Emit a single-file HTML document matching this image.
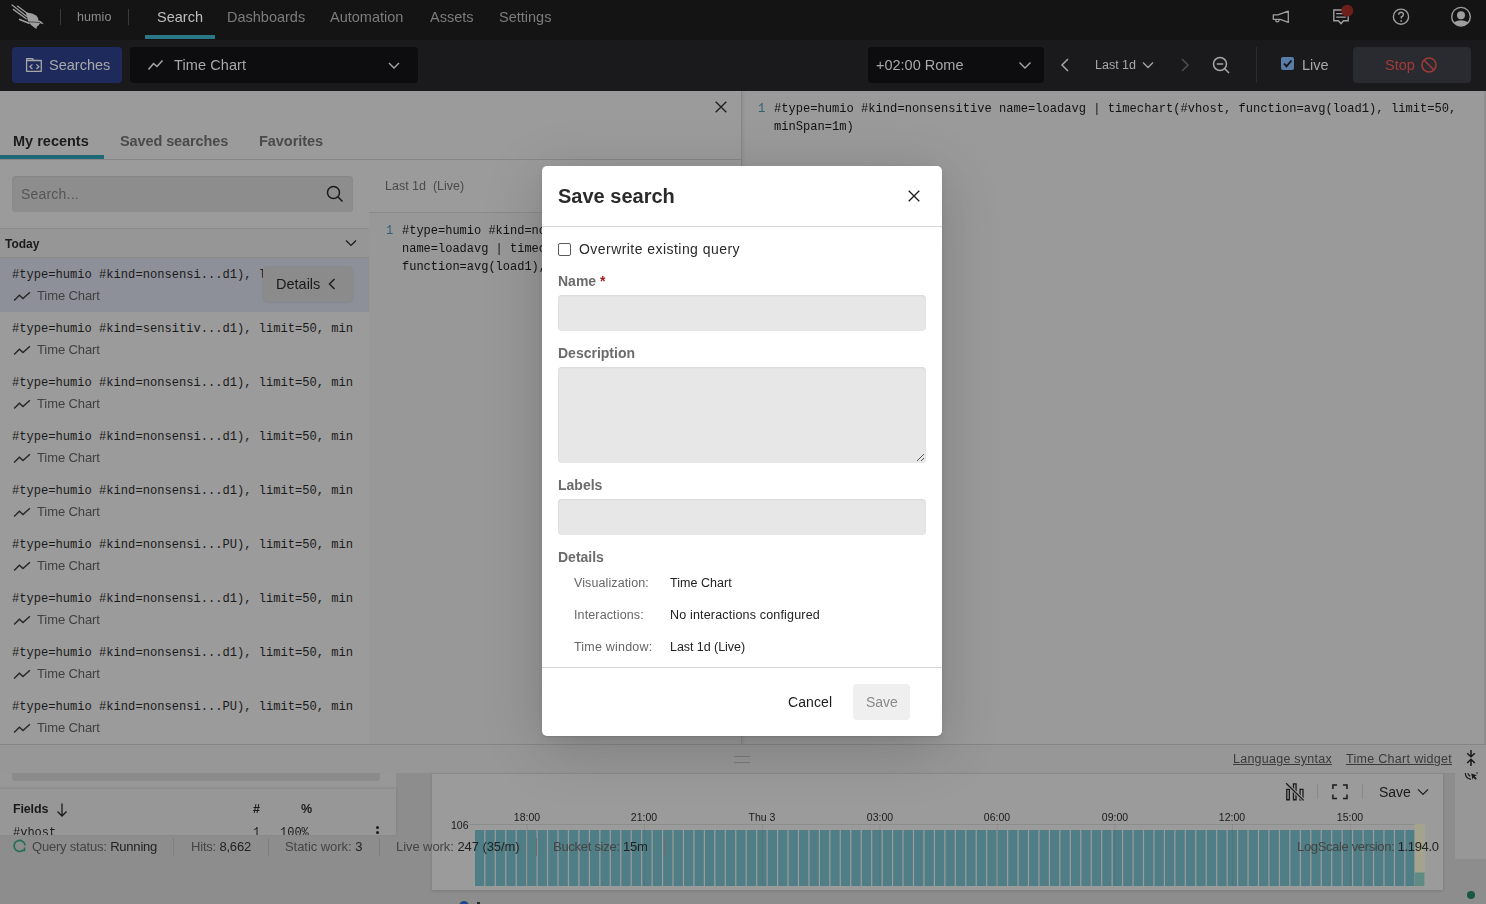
<!DOCTYPE html>
<html><head><meta charset="utf-8"><style>
html,body{margin:0;padding:0;width:1486px;height:904px;overflow:hidden;background:#9a9a9a;}
.t{position:absolute;white-space:pre;line-height:1;will-change:transform;}
.b{position:absolute;}
</style></head><body>
<div class="b" style="left:0px;top:0px;width:1486px;height:904px;background:#9a9a9a;"></div>
<div class="b" style="left:0px;top:0px;width:1486px;height:40px;background:#141414;"></div>
<svg class="b" style="left:8px;top:2px;" width="42" height="32" viewBox="0 0 42 32"><g stroke="#9f9f9f" stroke-linecap="round" fill="none"><path d="M4.1 3 L18.4 14.2" stroke-width="1.3"/><path d="M9.4 4.1 L19.8 11.7" stroke-width="1.2"/><path d="M5.3 7.4 L18.2 16.8" stroke-width="1.3"/><path d="M11.7 17.4 L21 21.2" stroke-width="1.6"/></g><path d="M17.7 10.3 L24 11.5 L28.3 13.5 L30.1 16 L30.1 18.1 L33.6 19.8 L35.8 22.3 L32 21.3 L30.5 23.5 L29 24.5 L28.3 27 L23 23 L19.8 18.4 Z" fill="#9f9f9f"/><path d="M21 19.8 L32 20.5" stroke="#151515" stroke-width="0.6"/></svg>
<div class="b" style="left:60px;top:9px;width:1px;height:16px;background:#3a3a3a;"></div>
<div class="t" style="left:77.3px;top:11.22px;font-size:12.5px;color:#8c8c8c;font-weight:400;font-family:'Liberation Sans', sans-serif;letter-spacing:0.1px;">humio</div>
<div class="b" style="left:128px;top:9px;width:1px;height:16px;background:#3a3a3a;"></div>
<div class="t" style="left:157px;top:9.93px;font-size:14.5px;color:#bdbdbd;font-weight:500;font-family:'Liberation Sans', sans-serif;">Search</div>
<div class="b" style="left:145px;top:35px;width:70px;height:4px;background:#2a7788;"></div>
<div class="t" style="left:226.5px;top:9.93px;font-size:14.5px;color:#7c7c7c;font-weight:400;font-family:'Liberation Sans', sans-serif;">Dashboards</div>
<div class="t" style="left:330px;top:9.93px;font-size:14.5px;color:#7c7c7c;font-weight:400;font-family:'Liberation Sans', sans-serif;">Automation</div>
<div class="t" style="left:430.3px;top:9.93px;font-size:14.5px;color:#7c7c7c;font-weight:400;font-family:'Liberation Sans', sans-serif;">Assets</div>
<div class="t" style="left:498.5px;top:9.93px;font-size:14.5px;color:#7c7c7c;font-weight:400;font-family:'Liberation Sans', sans-serif;">Settings</div>
<svg class="b" style="left:1270px;top:6px;" width="22" height="22" viewBox="0 0 22 22"><path d="M3.3 8.9 H7.8 L18.3 5.1 V16.4 L10.2 13.3 H3.3 Z" fill="none" stroke="#9e9e9e" stroke-width="1.3" stroke-linejoin="round"/><path d="M5.6 13.4 Q5.6 15.8 7.4 15.8 Q9.2 15.8 9.2 13.6" fill="none" stroke="#9e9e9e" stroke-width="1.2"/></svg>
<svg class="b" style="left:1330px;top:4px;" width="26" height="26" viewBox="0 0 26 26"><path d="M3.8 6 H18.2 V16.8 H13.6 L11 19.6 L8.4 16.8 H3.8 Z" fill="none" stroke="#9e9e9e" stroke-width="1.4"/><path d="M6.2 9.6 H15 M6.2 13.2 H15.8" stroke="#9e9e9e" stroke-width="1.3"/><circle cx="17.3" cy="6.8" r="6" fill="#6f1f1b"/></svg>
<svg class="b" style="left:1391px;top:7px;" width="20" height="20" viewBox="0 0 20 20"><circle cx="10" cy="9.7" r="7.6" fill="none" stroke="#9e9e9e" stroke-width="1.4"/><path d="M7.6 7.8 Q7.8 5.3 10.1 5.3 Q12.5 5.4 12.4 7.6 Q12.3 9 10.3 10 V11.6" fill="none" stroke="#9e9e9e" stroke-width="1.4"/><circle cx="10.2" cy="13.9" r="0.9" fill="#9e9e9e"/></svg>
<svg class="b" style="left:1450px;top:6px;" width="22" height="22" viewBox="0 0 22 22"><defs><clipPath id="uc"><circle cx="11" cy="10.7" r="9.3"/></clipPath></defs><circle cx="11" cy="10.7" r="9.3" fill="none" stroke="#9e9e9e" stroke-width="1.4"/><g clip-path="url(#uc)"><circle cx="11" cy="9.3" r="4" fill="#9e9e9e"/><ellipse cx="11" cy="19.8" rx="8.5" ry="5.6" fill="#9e9e9e"/></g></svg>
<div class="b" style="left:0px;top:40px;width:1486px;height:51px;background:#1a1a1d;"></div>
<div class="b" style="left:12px;top:47px;width:110px;height:36px;background:#1e2a5b;border-radius:4px;"></div>
<svg class="b" style="left:25px;top:56px;" width="19" height="18" viewBox="0 0 19 18"><path d="M1.6 2.6 V15.3 H16.3 V4.5 H8.8 L7.6 2.6 Z M1.6 4.5 H8.8" fill="none" stroke="#a6a6a6" stroke-width="1.3" stroke-linejoin="round"/><path d="M7.4 8.4 L4.9 10.8 L7.4 13.1 M11.4 8.4 L13.9 10.8 L11.4 13.1" fill="none" stroke="#a6a6a6" stroke-width="1.3"/></svg>
<div class="t" style="left:48.5px;top:57.73px;font-size:14.5px;color:#a8a8a8;font-weight:400;font-family:'Liberation Sans', sans-serif;">Searches</div>
<div class="b" style="left:130px;top:47px;width:288px;height:36px;background:#0d0d0f;border-radius:4px;"></div>
<svg class="b" style="left:147px;top:57px;" width="18" height="16" viewBox="0 0 18 16"><path d="M1.5 12.5 L6.5 6.5 L10 9.5 L15.5 3.5" fill="none" stroke="#a6a6a6" stroke-width="1.5"/></svg>
<div class="t" style="left:174.3px;top:57.73px;font-size:14.5px;color:#a8a8a8;font-weight:400;font-family:'Liberation Sans', sans-serif;letter-spacing:0.1px;">Time Chart</div>
<svg class="b" style="left:387px;top:58px;" width="14" height="14" viewBox="0 0 14 14"><path d="M2 5 L7 10 L12 5" fill="none" stroke="#a6a6a6" stroke-width="1.4"/></svg>
<div class="b" style="left:868px;top:47px;width:176px;height:36px;background:#0d0d0f;border-radius:4px;"></div>
<div class="t" style="left:876px;top:57.73px;font-size:14.5px;color:#a8a8a8;font-weight:400;font-family:'Liberation Sans', sans-serif;">+02:00 Rome</div>
<svg class="b" style="left:1018px;top:58px;" width="14" height="14" viewBox="0 0 14 14"><path d="M1.5 4.5 L7 10 L12.5 4.5" fill="none" stroke="#a6a6a6" stroke-width="1.4"/></svg>
<svg class="b" style="left:1058px;top:57px;" width="14" height="16" viewBox="0 0 14 16"><path d="M10 2 L4 8 L10 14" fill="none" stroke="#a6a6a6" stroke-width="1.5"/></svg>
<div class="t" style="left:1095px;top:59.42px;font-size:12.5px;color:#a8a8a8;font-weight:400;font-family:'Liberation Sans', sans-serif;">Last 1d</div>
<svg class="b" style="left:1141px;top:59px;" width="14" height="12" viewBox="0 0 14 12"><path d="M2 3.5 L7 8.5 L12 3.5" fill="none" stroke="#a6a6a6" stroke-width="1.3"/></svg>
<svg class="b" style="left:1178px;top:57px;" width="14" height="16" viewBox="0 0 14 16"><path d="M4 2 L10 8 L4 14" fill="none" stroke="#4e4e52" stroke-width="1.5"/></svg>
<svg class="b" style="left:1211px;top:55px;" width="22" height="20" viewBox="0 0 22 20"><circle cx="9" cy="9" r="6.5" fill="none" stroke="#a6a6a6" stroke-width="1.5"/><path d="M5.8 9 H12.2 M13.8 13.8 L18 18" stroke="#a6a6a6" stroke-width="1.6"/></svg>
<div class="b" style="left:1256px;top:47px;width:1px;height:36px;background:#2c2c2e;"></div>
<div class="b" style="left:1281px;top:57px;width:13px;height:13px;background:#5a7ca8;border-radius:2px;"></div>
<svg class="b" style="left:1281px;top:57px;" width="13" height="13" viewBox="0 0 13 13"><path d="M3 6.5 L5.5 9.3 L10.5 3.5" fill="none" stroke="#111" stroke-width="1.8"/></svg>
<div class="t" style="left:1302px;top:57.73px;font-size:14.5px;color:#a8a8a8;font-weight:400;font-family:'Liberation Sans', sans-serif;">Live</div>
<div class="b" style="left:1353px;top:47px;width:118px;height:36px;background:#2a2b30;border-radius:4px;"></div>
<div class="t" style="left:1384.5px;top:57.73px;font-size:14.5px;color:#a33a3a;font-weight:400;font-family:'Liberation Sans', sans-serif;">Stop</div>
<svg class="b" style="left:1420px;top:56px;" width="18" height="18" viewBox="0 0 18 18"><circle cx="9" cy="9" r="7" fill="none" stroke="#a33a3a" stroke-width="1.5"/><path d="M4.2 4.2 L13.8 13.8" stroke="#a33a3a" stroke-width="1.5"/></svg>
<div class="b" style="left:0px;top:91px;width:741px;height:654px;background:#9b9b9b;"></div>
<div class="b" style="left:742px;top:91px;width:744px;height:654px;background:#9a9a9a;"></div>
<div class="b" style="left:741px;top:91px;width:1px;height:654px;background:#878787;"></div>
<div class="b" style="left:742px;top:91px;width:4px;height:654px;background:linear-gradient(90deg,rgba(0,0,0,0.06),rgba(0,0,0,0));"></div>
<div class="b" style="left:1484px;top:91px;width:2px;height:654px;background:#8e8e8e;"></div>
<svg class="b" style="left:714px;top:100px;" width="14" height="14" viewBox="0 0 14 14"><path d="M1.7 1.7 L12.3 12.3 M12.3 1.7 L1.7 12.3" stroke="#1c1c1c" stroke-width="1.3"/></svg>
<div class="t" style="left:12.5px;top:133.73px;font-size:14.5px;color:#1c1c1c;font-weight:700;font-family:'Liberation Sans', sans-serif;">My recents</div>
<div class="t" style="left:119.8px;top:133.73px;font-size:14.5px;color:#4a4a4a;font-weight:700;font-family:'Liberation Sans', sans-serif;letter-spacing:-0.1px;">Saved searches</div>
<div class="t" style="left:259px;top:133.73px;font-size:14.5px;color:#4a4a4a;font-weight:700;font-family:'Liberation Sans', sans-serif;letter-spacing:-0.05px;">Favorites</div>
<div class="b" style="left:0px;top:159px;width:741px;height:1px;background:#878787;"></div>
<div class="b" style="left:0px;top:155px;width:104px;height:4px;background:#1e6878;"></div>
<div class="b" style="left:12px;top:176px;width:341px;height:36px;background:#8d8d8d;border-radius:4px;box-shadow:inset 0 1px 2px rgba(0,0,0,0.06);"></div>
<div class="t" style="left:20.5px;top:187.15px;font-size:14px;color:#555555;font-weight:400;font-family:'Liberation Sans', sans-serif;letter-spacing:0.2px;">Search...</div>
<svg class="b" style="left:324px;top:183px;" width="22" height="22" viewBox="0 0 22 22"><circle cx="9.5" cy="9.5" r="6" fill="none" stroke="#1a1a1a" stroke-width="1.5"/><path d="M13.8 13.8 L18.5 18.5" stroke="#1a1a1a" stroke-width="1.6"/></svg>
<div class="b" style="left:0px;top:228px;width:369px;height:1px;background:#8c8c8c;"></div>
<div class="b" style="left:0px;top:229px;width:369px;height:28px;background:#969696;"></div>
<div class="b" style="left:0px;top:257px;width:369px;height:1px;background:#8a8a8a;"></div>
<div class="t" style="left:5px;top:237.84px;font-size:12px;color:#1a1a1a;font-weight:700;font-family:'Liberation Sans', sans-serif;">Today</div>
<svg class="b" style="left:344px;top:237px;" width="14" height="12" viewBox="0 0 14 12"><path d="M2 3.5 L7 8.5 L12 3.5" fill="none" stroke="#1a1a1a" stroke-width="1.2"/></svg>
<div class="b" style="left:0;top:258px;width:369px;height:487px;overflow:hidden;">
<div class="b" style="left:0;top:0;width:369px;height:54px;background:#8e9099;"></div>
<div class="b" style="left:12px;top:11.33px;width:251px;overflow:hidden;white-space:pre;font-family:'Liberation Mono', monospace;font-size:12.1px;line-height:1;color:#1a1a1a;">#type=humio #kind=nonsensi...d1), limit=50, minSpan=1m)</div>
<svg class="b" style="left:13px;top:33px" width="18" height="12" viewBox="0 0 18 12"><path d="M1.1 9.6 L6.4 4.2 L10 7.6 L16.9 1.3" fill="none" stroke="#262626" stroke-width="1.4"/></svg>
<div class="t" style="left:36.8px;top:30.70px;font-size:13px;letter-spacing:-0.1px;color:#404040;font-family:'Liberation Sans', sans-serif;">Time Chart</div>
<div class="b" style="left:12px;top:65.33px;width:341px;overflow:hidden;white-space:pre;font-family:'Liberation Mono', monospace;font-size:12.1px;line-height:1;color:#1a1a1a;">#type=humio #kind=sensitiv...d1), limit=50, minSpan=1m)</div>
<svg class="b" style="left:13px;top:87px" width="18" height="12" viewBox="0 0 18 12"><path d="M1.1 9.6 L6.4 4.2 L10 7.6 L16.9 1.3" fill="none" stroke="#262626" stroke-width="1.4"/></svg>
<div class="t" style="left:36.8px;top:84.70px;font-size:13px;letter-spacing:-0.1px;color:#404040;font-family:'Liberation Sans', sans-serif;">Time Chart</div>
<div class="b" style="left:12px;top:119.33px;width:341px;overflow:hidden;white-space:pre;font-family:'Liberation Mono', monospace;font-size:12.1px;line-height:1;color:#1a1a1a;">#type=humio #kind=nonsensi...d1), limit=50, minSpan=1m)</div>
<svg class="b" style="left:13px;top:141px" width="18" height="12" viewBox="0 0 18 12"><path d="M1.1 9.6 L6.4 4.2 L10 7.6 L16.9 1.3" fill="none" stroke="#262626" stroke-width="1.4"/></svg>
<div class="t" style="left:36.8px;top:138.70px;font-size:13px;letter-spacing:-0.1px;color:#404040;font-family:'Liberation Sans', sans-serif;">Time Chart</div>
<div class="b" style="left:12px;top:173.33px;width:341px;overflow:hidden;white-space:pre;font-family:'Liberation Mono', monospace;font-size:12.1px;line-height:1;color:#1a1a1a;">#type=humio #kind=nonsensi...d1), limit=50, minSpan=1m)</div>
<svg class="b" style="left:13px;top:195px" width="18" height="12" viewBox="0 0 18 12"><path d="M1.1 9.6 L6.4 4.2 L10 7.6 L16.9 1.3" fill="none" stroke="#262626" stroke-width="1.4"/></svg>
<div class="t" style="left:36.8px;top:192.70px;font-size:13px;letter-spacing:-0.1px;color:#404040;font-family:'Liberation Sans', sans-serif;">Time Chart</div>
<div class="b" style="left:12px;top:227.33px;width:341px;overflow:hidden;white-space:pre;font-family:'Liberation Mono', monospace;font-size:12.1px;line-height:1;color:#1a1a1a;">#type=humio #kind=nonsensi...d1), limit=50, minSpan=1m)</div>
<svg class="b" style="left:13px;top:249px" width="18" height="12" viewBox="0 0 18 12"><path d="M1.1 9.6 L6.4 4.2 L10 7.6 L16.9 1.3" fill="none" stroke="#262626" stroke-width="1.4"/></svg>
<div class="t" style="left:36.8px;top:246.70px;font-size:13px;letter-spacing:-0.1px;color:#404040;font-family:'Liberation Sans', sans-serif;">Time Chart</div>
<div class="b" style="left:12px;top:281.33px;width:341px;overflow:hidden;white-space:pre;font-family:'Liberation Mono', monospace;font-size:12.1px;line-height:1;color:#1a1a1a;">#type=humio #kind=nonsensi...PU), limit=50, minSpan=1m)</div>
<svg class="b" style="left:13px;top:303px" width="18" height="12" viewBox="0 0 18 12"><path d="M1.1 9.6 L6.4 4.2 L10 7.6 L16.9 1.3" fill="none" stroke="#262626" stroke-width="1.4"/></svg>
<div class="t" style="left:36.8px;top:300.70px;font-size:13px;letter-spacing:-0.1px;color:#404040;font-family:'Liberation Sans', sans-serif;">Time Chart</div>
<div class="b" style="left:12px;top:335.33px;width:341px;overflow:hidden;white-space:pre;font-family:'Liberation Mono', monospace;font-size:12.1px;line-height:1;color:#1a1a1a;">#type=humio #kind=nonsensi...d1), limit=50, minSpan=1m)</div>
<svg class="b" style="left:13px;top:357px" width="18" height="12" viewBox="0 0 18 12"><path d="M1.1 9.6 L6.4 4.2 L10 7.6 L16.9 1.3" fill="none" stroke="#262626" stroke-width="1.4"/></svg>
<div class="t" style="left:36.8px;top:354.70px;font-size:13px;letter-spacing:-0.1px;color:#404040;font-family:'Liberation Sans', sans-serif;">Time Chart</div>
<div class="b" style="left:12px;top:389.33px;width:341px;overflow:hidden;white-space:pre;font-family:'Liberation Mono', monospace;font-size:12.1px;line-height:1;color:#1a1a1a;">#type=humio #kind=nonsensi...d1), limit=50, minSpan=1m)</div>
<svg class="b" style="left:13px;top:411px" width="18" height="12" viewBox="0 0 18 12"><path d="M1.1 9.6 L6.4 4.2 L10 7.6 L16.9 1.3" fill="none" stroke="#262626" stroke-width="1.4"/></svg>
<div class="t" style="left:36.8px;top:408.70px;font-size:13px;letter-spacing:-0.1px;color:#404040;font-family:'Liberation Sans', sans-serif;">Time Chart</div>
<div class="b" style="left:12px;top:443.33px;width:341px;overflow:hidden;white-space:pre;font-family:'Liberation Mono', monospace;font-size:12.1px;line-height:1;color:#1a1a1a;">#type=humio #kind=nonsensi...PU), limit=50, minSpan=1m)</div>
<svg class="b" style="left:13px;top:465px" width="18" height="12" viewBox="0 0 18 12"><path d="M1.1 9.6 L6.4 4.2 L10 7.6 L16.9 1.3" fill="none" stroke="#262626" stroke-width="1.4"/></svg>
<div class="t" style="left:36.8px;top:462.70px;font-size:13px;letter-spacing:-0.1px;color:#404040;font-family:'Liberation Sans', sans-serif;">Time Chart</div>
</div>
<div class="b" style="left:263px;top:266px;width:90px;height:36px;background:#8b8b8b;border-radius:5px;box-shadow:0 1px 2px rgba(0,0,0,0.08);"></div>
<div class="t" style="left:275.8px;top:276.73px;font-size:14.5px;color:#1a1a1a;font-weight:400;font-family:'Liberation Sans', sans-serif;">Details</div>
<svg class="b" style="left:326px;top:277px;" width="12" height="14" viewBox="0 0 12 14"><path d="M8.5 2 L3.5 7 L8.5 12" fill="none" stroke="#1a1a1a" stroke-width="1.4"/></svg>
<div class="b" style="left:369px;top:212px;width:0px;height:0px;background:#000;"></div>
<div class="t" style="left:385px;top:180.42px;font-size:12.5px;color:#4a4a4a;font-weight:400;font-family:'Liberation Sans', sans-serif;">Last 1d  (Live)</div>
<div class="b" style="left:369px;top:212px;width:372px;height:1px;background:#8a8a8a;"></div>
<div class="b" style="left:369px;top:213px;width:372px;height:532px;background:#989898;"></div>
<div class="t" style="left:385.5px;top:225.30px;font-size:12px;color:#2d5f70;font-weight:400;font-family:'Liberation Mono', monospace;">1</div>
<div class="t" style="left:402px;top:225.30px;font-size:12px;color:#111111;font-weight:400;font-family:'Liberation Mono', monospace;">#type=humio #kind=nonsensitive</div>
<div class="t" style="left:402px;top:243.30px;font-size:12px;color:#111111;font-weight:400;font-family:'Liberation Mono', monospace;">name=loadavg | timechart(#vhost,</div>
<div class="t" style="left:402px;top:261.30px;font-size:12px;color:#111111;font-weight:400;font-family:'Liberation Mono', monospace;">function=avg(load1), limit=50,</div>
<div class="t" style="left:757.5px;top:102.80px;font-size:12px;color:#2d5f70;font-weight:400;font-family:'Liberation Mono', monospace;">1</div>
<div class="t" style="left:774px;top:102.73px;font-size:12.1px;color:#111111;font-weight:400;font-family:'Liberation Mono', monospace;">#type=humio #kind=nonsensitive name=loadavg | timechart(#vhost, function=avg(load1), limit=50,</div>
<div class="t" style="left:774px;top:120.73px;font-size:12.1px;color:#111111;font-weight:400;font-family:'Liberation Mono', monospace;">minSpan=1m)</div>
<div class="b" style="left:0px;top:745px;width:1486px;height:159px;background:#8d8d8d;"></div>
<div class="b" style="left:0px;top:744px;width:1486px;height:1px;background:#858585;"></div>
<div class="b" style="left:0px;top:745px;width:1486px;height:28px;background:#979797;"></div>
<div class="b" style="left:734px;top:756px;width:16px;height:1px;background:#7a7a7a;"></div>
<div class="b" style="left:734px;top:762px;width:16px;height:1px;background:#7a7a7a;"></div>
<div class="t" style="left:1233px;top:753.42px;font-size:12.5px;color:#3a3a3a;font-weight:400;font-family:'Liberation Sans', sans-serif;letter-spacing:0.25px;text-decoration:underline;">Language syntax</div>
<div class="t" style="left:1346px;top:753.42px;font-size:12.5px;color:#3a3a3a;font-weight:400;font-family:'Liberation Sans', sans-serif;letter-spacing:0.3px;text-decoration:underline;">Time Chart widget</div>
<svg class="b" style="left:1463px;top:748px;" width="16" height="20" viewBox="0 0 16 20"><path d="M8 2 V8.5 M4.2 5.2 L8 8.8 L11.8 5.2 M8 18 V11.5 M4.2 15 L8 11.3 L11.8 15" fill="none" stroke="#1a1a1a" stroke-width="1.5"/></svg>
<div class="b" style="left:0px;top:773px;width:396px;height:16px;background:#989898;"></div>
<div class="b" style="left:12px;top:773px;width:368px;height:8px;background:#8b8b8b;border-radius:0 0 4px 4px;"></div>
<div class="b" style="left:0px;top:789px;width:396px;height:46px;background:#979797;box-shadow:0 -1px 3px rgba(0,0,0,0.12);"></div>
<div class="t" style="left:13px;top:803.42px;font-size:12.5px;color:#1a1a1a;font-weight:700;font-family:'Liberation Sans', sans-serif;letter-spacing:-0.15px;">Fields</div>
<svg class="b" style="left:55px;top:802px;" width="14" height="16" viewBox="0 0 14 16"><path d="M7 1.5 V14 M2.5 9.5 L7 14 L11.5 9.5" fill="none" stroke="#1a1a1a" stroke-width="1.3"/></svg>
<div class="t" style="left:253px;top:803.42px;font-size:12.5px;color:#1a1a1a;font-weight:700;font-family:'Liberation Sans', sans-serif;">#</div>
<div class="t" style="left:301px;top:803.42px;font-size:12.5px;color:#1a1a1a;font-weight:700;font-family:'Liberation Sans', sans-serif;">%</div>
<div class="b" style="left:0;top:789px;width:396px;height:46px;overflow:hidden;">
<div class="t" style="left:13px;top:38.30px;font-family:'Liberation Mono', monospace;font-size:12px;color:#1a1a1a;">#vhost</div>
<div class="t" style="left:253px;top:38.30px;font-family:'Liberation Mono', monospace;font-size:12px;color:#1a1a1a;">1</div>
<div class="t" style="left:280px;top:38.30px;font-family:'Liberation Mono', monospace;font-size:12px;color:#1a1a1a;">100%</div>
<div class="b" style="left:376px;top:37px;width:3px;height:3px;border-radius:50%;background:#1a1a1a;"></div>
<div class="b" style="left:376px;top:42px;width:3px;height:3px;border-radius:50%;background:#1a1a1a;"></div>
</div>
<div class="b" style="left:432px;top:773px;width:1011px;height:117px;background:#9b9b9b;box-shadow:0 1px 3px rgba(0,0,0,0.15);"></div>
<div class="b" style="left:432px;top:773px;width:1054px;height:1px;background:#8a8a8a;"></div>
<div class="b" style="left:1455px;top:773px;width:31px;height:86px;background:#979797;"></div>
<svg class="b" style="left:1463px;top:770px;" width="16" height="12" viewBox="0 0 16 12"><path d="M2.3 3 Q2.5 8.5 8 9.3 M4.8 3.3 Q5.8 5.5 7.3 6.3" fill="none" stroke="#1a1a1a" stroke-width="1.2"/><path d="M8.2 3.6 L14 5.3 L11.6 6.3 L13.8 8.6 L12.5 9.7 L10.4 7.4 L9.6 9.8 Z" fill="#1a1a1a"/><circle cx="14" cy="3" r="0.8" fill="#1a1a1a"/></svg>
<div class="b" style="left:1467px;top:891px;width:8px;height:8px;border-radius:50%;background:#1a5840;"></div>
<svg class="b" style="left:1283px;top:781px;" width="24" height="22" viewBox="0 0 24 22"><path d="M3.75 8.45 H6.35 V18.75 H3.75 Z M10.45 2.85 H13.05 V18.75 H10.45 Z M17.05 8.45 H19.95 V18.75 H17.05 Z" fill="none" stroke="#1a1a1a" stroke-width="1.3"/><path d="M3.1 2.2 L20.6 19.4" stroke="#9b9b9b" stroke-width="3.2"/><path d="M3.1 2.2 L20.6 19.4" stroke="#1a1a1a" stroke-width="1.3"/></svg>
<div class="b" style="left:1317px;top:784px;width:1px;height:15px;background:#888;"></div>
<svg class="b" style="left:1329px;top:782px;" width="22" height="20" viewBox="0 0 22 20"><path d="M3.9 7 V3.1 H8 M14 3.1 H18 V7 M18 12.5 V16.5 H14 M8 16.5 H3.9 V12.5" fill="none" stroke="#1a1a1a" stroke-width="1.5"/></svg>
<div class="b" style="left:1362px;top:784px;width:1px;height:15px;background:#888;"></div>
<div class="t" style="left:1379.4px;top:785.35px;font-size:14px;color:#1a1a1a;font-weight:400;font-family:'Liberation Sans', sans-serif;">Save</div>
<svg class="b" style="left:1416px;top:786px;" width="14" height="12" viewBox="0 0 14 12"><path d="M2 3.3 L7 8.3 L12 3.3" fill="none" stroke="#1a1a1a" stroke-width="1.2"/></svg>
<div class="t" style="left:451px;top:820.11px;font-size:10.5px;color:#1a1a1a;font-weight:400;font-family:'Liberation Sans', sans-serif;">106</div>
<div class="b" style="left:470px;top:824px;width:955px;height:1px;background:#8c8c8c;"></div>
<div class="t" style="left:496.5px;width:60px;text-align:center;top:812.11px;font-size:10.5px;color:#1a1a1a;font-family:'Liberation Sans', sans-serif;">18:00</div>
<div class="t" style="left:614px;width:60px;text-align:center;top:812.11px;font-size:10.5px;color:#1a1a1a;font-family:'Liberation Sans', sans-serif;">21:00</div>
<div class="t" style="left:732px;width:60px;text-align:center;top:812.11px;font-size:10.5px;color:#1a1a1a;font-family:'Liberation Sans', sans-serif;">Thu 3</div>
<div class="t" style="left:849.5px;width:60px;text-align:center;top:812.11px;font-size:10.5px;color:#1a1a1a;font-family:'Liberation Sans', sans-serif;">03:00</div>
<div class="t" style="left:967px;width:60px;text-align:center;top:812.11px;font-size:10.5px;color:#1a1a1a;font-family:'Liberation Sans', sans-serif;">06:00</div>
<div class="t" style="left:1084.5px;width:60px;text-align:center;top:812.11px;font-size:10.5px;color:#1a1a1a;font-family:'Liberation Sans', sans-serif;">09:00</div>
<div class="t" style="left:1202px;width:60px;text-align:center;top:812.11px;font-size:10.5px;color:#1a1a1a;font-family:'Liberation Sans', sans-serif;">12:00</div>
<div class="t" style="left:1320px;width:60px;text-align:center;top:812.11px;font-size:10.5px;color:#1a1a1a;font-family:'Liberation Sans', sans-serif;">15:00</div>
<svg class="b" style="left:432px;top:773px;" width="1011" height="116" viewBox="0 0 1011 116"><rect x="43.00" y="57" width="9.21" height="56" fill="#4f7e86"/><rect x="53.45" y="57" width="9.21" height="56" fill="#4f7e86"/><rect x="63.91" y="57" width="9.21" height="56" fill="#4f7e86"/><rect x="74.37" y="57" width="9.21" height="56" fill="#4f7e86"/><rect x="84.82" y="57" width="9.21" height="56" fill="#4f7e86"/><rect x="95.27" y="57" width="9.21" height="56" fill="#4f7e86"/><rect x="105.73" y="57" width="9.21" height="56" fill="#4f7e86"/><rect x="116.18" y="57" width="9.21" height="56" fill="#4f7e86"/><rect x="126.64" y="57" width="9.21" height="56" fill="#4f7e86"/><rect x="137.10" y="57" width="9.21" height="56" fill="#4f7e86"/><rect x="147.55" y="57" width="9.21" height="56" fill="#4f7e86"/><rect x="158.00" y="57" width="9.21" height="56" fill="#4f7e86"/><rect x="168.46" y="57" width="9.21" height="56" fill="#4f7e86"/><rect x="178.91" y="57" width="9.21" height="56" fill="#4f7e86"/><rect x="189.37" y="57" width="9.21" height="56" fill="#4f7e86"/><rect x="199.83" y="57" width="9.21" height="56" fill="#4f7e86"/><rect x="210.28" y="57" width="9.21" height="56" fill="#4f7e86"/><rect x="220.74" y="57" width="9.21" height="56" fill="#4f7e86"/><rect x="231.19" y="57" width="9.21" height="56" fill="#4f7e86"/><rect x="241.64" y="57" width="9.21" height="56" fill="#4f7e86"/><rect x="252.10" y="57" width="9.21" height="56" fill="#4f7e86"/><rect x="262.56" y="57" width="9.21" height="56" fill="#4f7e86"/><rect x="273.01" y="57" width="9.21" height="56" fill="#4f7e86"/><rect x="283.47" y="57" width="9.21" height="56" fill="#4f7e86"/><rect x="293.92" y="57" width="9.21" height="56" fill="#4f7e86"/><rect x="304.38" y="57" width="9.21" height="56" fill="#4f7e86"/><rect x="314.83" y="57" width="9.21" height="56" fill="#4f7e86"/><rect x="325.29" y="57" width="9.21" height="56" fill="#4f7e86"/><rect x="335.74" y="57" width="9.21" height="56" fill="#4f7e86"/><rect x="346.19" y="57" width="9.21" height="56" fill="#4f7e86"/><rect x="356.65" y="57" width="9.21" height="56" fill="#4f7e86"/><rect x="367.11" y="57" width="9.21" height="56" fill="#4f7e86"/><rect x="377.56" y="57" width="9.21" height="56" fill="#4f7e86"/><rect x="388.01" y="57" width="9.21" height="56" fill="#4f7e86"/><rect x="398.47" y="57" width="9.21" height="56" fill="#4f7e86"/><rect x="408.92" y="57" width="9.21" height="56" fill="#4f7e86"/><rect x="419.38" y="57" width="9.21" height="56" fill="#4f7e86"/><rect x="429.84" y="57" width="9.21" height="56" fill="#4f7e86"/><rect x="440.29" y="57" width="9.21" height="56" fill="#4f7e86"/><rect x="450.75" y="57" width="9.21" height="56" fill="#4f7e86"/><rect x="461.20" y="57" width="9.21" height="56" fill="#4f7e86"/><rect x="471.65" y="57" width="9.21" height="56" fill="#4f7e86"/><rect x="482.11" y="57" width="9.21" height="56" fill="#4f7e86"/><rect x="492.57" y="57" width="9.21" height="56" fill="#4f7e86"/><rect x="503.02" y="57" width="9.21" height="56" fill="#4f7e86"/><rect x="513.48" y="57" width="9.21" height="56" fill="#4f7e86"/><rect x="523.93" y="57" width="9.21" height="56" fill="#4f7e86"/><rect x="534.38" y="57" width="9.21" height="56" fill="#4f7e86"/><rect x="544.84" y="57" width="9.21" height="56" fill="#4f7e86"/><rect x="555.29" y="57" width="9.21" height="56" fill="#4f7e86"/><rect x="565.75" y="57" width="9.21" height="56" fill="#4f7e86"/><rect x="576.21" y="57" width="9.21" height="56" fill="#4f7e86"/><rect x="586.66" y="57" width="9.21" height="56" fill="#4f7e86"/><rect x="597.12" y="57" width="9.21" height="56" fill="#4f7e86"/><rect x="607.57" y="57" width="9.21" height="56" fill="#4f7e86"/><rect x="618.03" y="57" width="9.21" height="56" fill="#4f7e86"/><rect x="628.48" y="57" width="9.21" height="56" fill="#4f7e86"/><rect x="638.93" y="57" width="9.21" height="56" fill="#4f7e86"/><rect x="649.39" y="57" width="9.21" height="56" fill="#4f7e86"/><rect x="659.85" y="57" width="9.21" height="56" fill="#4f7e86"/><rect x="670.30" y="57" width="9.21" height="56" fill="#4f7e86"/><rect x="680.76" y="57" width="9.21" height="56" fill="#4f7e86"/><rect x="691.21" y="57" width="9.21" height="56" fill="#4f7e86"/><rect x="701.66" y="57" width="9.21" height="56" fill="#4f7e86"/><rect x="712.12" y="57" width="9.21" height="56" fill="#4f7e86"/><rect x="722.58" y="57" width="9.21" height="56" fill="#4f7e86"/><rect x="733.03" y="57" width="9.21" height="56" fill="#4f7e86"/><rect x="743.49" y="57" width="9.21" height="56" fill="#4f7e86"/><rect x="753.94" y="57" width="9.21" height="56" fill="#4f7e86"/><rect x="764.39" y="57" width="9.21" height="56" fill="#4f7e86"/><rect x="774.85" y="57" width="9.21" height="56" fill="#4f7e86"/><rect x="785.30" y="57" width="9.21" height="56" fill="#4f7e86"/><rect x="795.76" y="57" width="9.21" height="56" fill="#4f7e86"/><rect x="806.22" y="57" width="9.21" height="56" fill="#4f7e86"/><rect x="816.67" y="57" width="9.21" height="56" fill="#4f7e86"/><rect x="827.12" y="57" width="9.21" height="56" fill="#4f7e86"/><rect x="837.58" y="57" width="9.21" height="56" fill="#4f7e86"/><rect x="848.03" y="57" width="9.21" height="56" fill="#4f7e86"/><rect x="858.49" y="57" width="9.21" height="56" fill="#4f7e86"/><rect x="868.95" y="57" width="9.21" height="56" fill="#4f7e86"/><rect x="879.40" y="57" width="9.21" height="56" fill="#4f7e86"/><rect x="889.86" y="57" width="9.21" height="56" fill="#4f7e86"/><rect x="900.31" y="57" width="9.21" height="56" fill="#4f7e86"/><rect x="910.76" y="57" width="9.21" height="56" fill="#4f7e86"/><rect x="921.22" y="57" width="9.21" height="56" fill="#4f7e86"/><rect x="931.67" y="57" width="9.21" height="56" fill="#4f7e86"/><rect x="942.13" y="57" width="9.21" height="56" fill="#4f7e86"/><rect x="952.59" y="57" width="9.21" height="56" fill="#4f7e86"/><rect x="963.04" y="57" width="9.21" height="56" fill="#4f7e86"/><rect x="973.49" y="57" width="9.21" height="56" fill="#4f7e86"/><rect x="94.50" y="51" width="1" height="62" fill="rgba(60,60,60,0.12)"/><rect x="212.00" y="51" width="1" height="62" fill="rgba(60,60,60,0.12)"/><rect x="330.00" y="51" width="1" height="62" fill="rgba(60,60,60,0.12)"/><rect x="447.50" y="51" width="1" height="62" fill="rgba(60,60,60,0.12)"/><rect x="565.00" y="51" width="1" height="62" fill="rgba(60,60,60,0.12)"/><rect x="682.50" y="51" width="1" height="62" fill="rgba(60,60,60,0.12)"/><rect x="800.00" y="51" width="1" height="62" fill="rgba(60,60,60,0.12)"/><rect x="918.00" y="51" width="1" height="62" fill="rgba(60,60,60,0.12)"/><rect x="982.5" y="51" width="10.5" height="62" fill="#a4a48e"/><rect x="982.5" y="99.5" width="10" height="13.5" fill="#5e8c84"/></svg>
<div class="b" style="left:459px;top:901px;width:10px;height:10px;border-radius:50%;background:#1f4a8a;"></div>
<div class="b" style="left:477px;top:902px;width:3px;height:2px;background:#2a2a2a;"></div>
<svg class="b" style="left:12px;top:838px;" width="16" height="16" viewBox="0 0 16 16"><path d="M13 7.5 A5.5 5.5 0 1 0 11.2 12" fill="none" stroke="#1f6e55" stroke-width="1.6"/><path d="M9.5 12.5 L12.5 12.5 L12.5 9.5" fill="none" stroke="#1f6e55" stroke-width="1.6"/></svg>
<div class="t" style="left:32px;top:840.00px;font-size:13px;color:#444;font-family:'Liberation Sans', sans-serif;letter-spacing:-0.2px;">Query status: <span style="color:#222">Running</span></div>
<div class="b" style="left:173px;top:838px;width:1px;height:18px;background:#7e7e7e;"></div>
<div class="t" style="left:191px;top:840.00px;font-size:13px;color:#444;font-family:'Liberation Sans', sans-serif;letter-spacing:-0.2px;">Hits: <span style="color:#222">8,662</span></div>
<div class="b" style="left:268px;top:838px;width:1px;height:18px;background:#7e7e7e;"></div>
<div class="t" style="left:285px;top:840.00px;font-size:13px;color:#444;font-family:'Liberation Sans', sans-serif;letter-spacing:-0.05px;">Static work: <span style="color:#222">3</span></div>
<div class="b" style="left:379px;top:838px;width:1px;height:18px;background:#7e7e7e;"></div>
<div class="t" style="left:396px;top:840.00px;font-size:13px;color:#444;font-family:'Liberation Sans', sans-serif;letter-spacing:-0.07px;">Live work: <span style="color:#222">247 (35/m)</span></div>
<div class="b" style="left:536px;top:838px;width:1px;height:18px;background:#6e6e6e;"></div>
<div class="t" style="left:553px;top:840.00px;font-size:13px;color:#444;font-family:'Liberation Sans', sans-serif;letter-spacing:-0.28px;">Bucket size: <span style="color:#222">15m</span></div>
<div class="b" style="left:664px;top:838px;width:1px;height:18px;background:#6e6e6e;"></div>
<div class="t" style="left:1297px;top:840.00px;font-size:13px;color:#444;font-family:'Liberation Sans', sans-serif;letter-spacing:-0.35px;">LogScale version: <span style="color:#222">1.194.0</span></div>
<div class="b" style="left:542px;top:166px;width:400px;height:570px;background:#ffffff;border-radius:5px;box-shadow:0 12px 60px rgba(0,0,0,0.18), 0 3px 10px rgba(0,0,0,0.07), 0 1px 2px rgba(0,0,0,0.08);"></div>
<div class="t" style="left:558px;top:185.87px;font-size:20px;color:#2a2a2a;font-weight:700;font-family:'Liberation Sans', sans-serif;">Save search</div>
<svg class="b" style="left:906px;top:188px;" width="16" height="16" viewBox="0 0 16 16"><path d="M2.7 2.7 L13.3 13.3 M13.3 2.7 L2.7 13.3" stroke="#1c1c1c" stroke-width="1.3"/></svg>
<div class="b" style="left:542px;top:226px;width:400px;height:1px;background:#d6d6d6;"></div>
<div class="b" style="left:558px;top:243px;width:13px;height:13px;background:#ffffff;border:1px solid #5a5a5a;border-radius:2px;box-sizing:border-box;"></div>
<div class="t" style="left:579px;top:241.95px;font-size:14px;color:#2a2a2a;font-weight:400;font-family:'Liberation Sans', sans-serif;letter-spacing:0.45px;">Overwrite existing query</div>
<div class="t" style="left:558px;top:273.65px;font-size:14px;color:#6b6b6b;font-weight:700;font-family:'Liberation Sans', sans-serif;">Name</div>
<div class="t" style="left:600px;top:273.65px;font-size:14px;color:#a31d1d;font-weight:700;font-family:'Liberation Sans', sans-serif;">*</div>
<div class="b" style="left:558px;top:295px;width:368px;height:36px;background:#e7e7e7;border-radius:4px;box-shadow:inset 0 1px 2px rgba(0,0,0,0.07), inset 1px 0 1px rgba(0,0,0,0.02);"></div>
<div class="t" style="left:558px;top:345.65px;font-size:14px;color:#6b6b6b;font-weight:700;font-family:'Liberation Sans', sans-serif;">Description</div>
<div class="b" style="left:558px;top:367px;width:368px;height:96px;background:#e7e7e7;border-radius:4px;box-shadow:inset 0 1px 2px rgba(0,0,0,0.07), inset 1px 0 1px rgba(0,0,0,0.02);"></div>
<svg class="b" style="left:915px;top:452px;" width="10" height="10" viewBox="0 0 10 10"><path d="M9 2 L2 9 M9 6 L6 9" stroke="#555" stroke-width="1"/></svg>
<div class="t" style="left:558px;top:477.65px;font-size:14px;color:#6b6b6b;font-weight:700;font-family:'Liberation Sans', sans-serif;">Labels</div>
<div class="b" style="left:558px;top:499px;width:368px;height:36px;background:#e7e7e7;border-radius:4px;box-shadow:inset 0 1px 2px rgba(0,0,0,0.07), inset 1px 0 1px rgba(0,0,0,0.02);"></div>
<div class="t" style="left:558px;top:549.85px;font-size:14px;color:#6b6b6b;font-weight:700;font-family:'Liberation Sans', sans-serif;">Details</div>
<div class="t" style="left:573.8px;top:577.42px;font-size:12.5px;color:#666666;font-weight:400;font-family:'Liberation Sans', sans-serif;letter-spacing:0.1px;">Visualization:</div>
<div class="t" style="left:670px;top:577.42px;font-size:12.5px;color:#222222;font-weight:400;font-family:'Liberation Sans', sans-serif;letter-spacing:0.05px;">Time Chart</div>
<div class="t" style="left:573.8px;top:609.42px;font-size:12.5px;color:#666666;font-weight:400;font-family:'Liberation Sans', sans-serif;letter-spacing:0.13px;">Interactions:</div>
<div class="t" style="left:670px;top:609.42px;font-size:12.5px;color:#222222;font-weight:400;font-family:'Liberation Sans', sans-serif;letter-spacing:0.18px;">No interactions configured</div>
<div class="t" style="left:573.8px;top:641.12px;font-size:12.5px;color:#666666;font-weight:400;font-family:'Liberation Sans', sans-serif;letter-spacing:0.2px;">Time window:</div>
<div class="t" style="left:670px;top:641.12px;font-size:12.5px;color:#222222;font-weight:400;font-family:'Liberation Sans', sans-serif;letter-spacing:-0.05px;">Last 1d (Live)</div>
<div class="b" style="left:542px;top:667px;width:400px;height:1px;background:#d6d6d6;"></div>
<div class="t" style="left:788.4px;top:694.85px;font-size:14px;color:#1c1c1c;font-weight:400;font-family:'Liberation Sans', sans-serif;letter-spacing:0.1px;">Cancel</div>
<div class="b" style="left:853px;top:684px;width:57px;height:36px;background:#efefef;border-radius:4px;"></div>
<div class="t" style="left:866px;top:694.85px;font-size:14px;color:#8a8a8a;font-weight:400;font-family:'Liberation Sans', sans-serif;">Save</div>
</body></html>
